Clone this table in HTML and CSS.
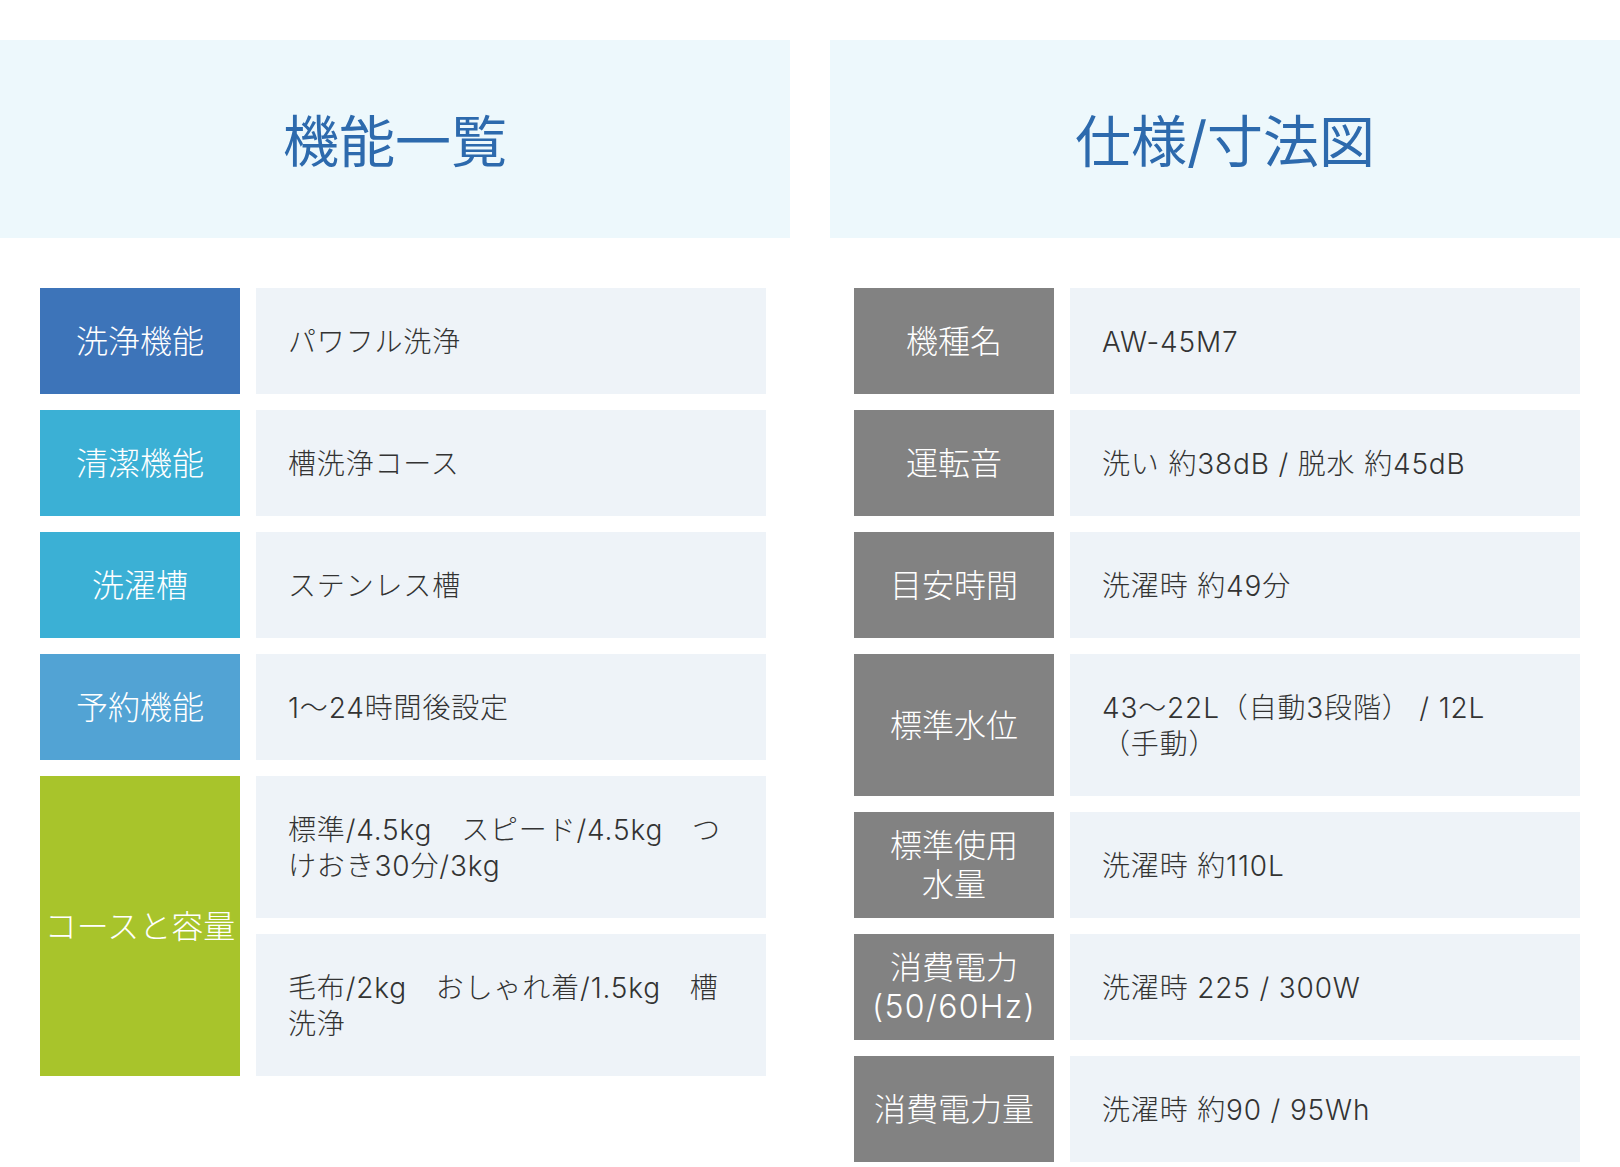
FILE: index.html
```html
<!DOCTYPE html>
<html lang="ja">
<head>
<meta charset="utf-8">
<title>機能一覧 / 仕様</title>
<link rel="stylesheet" href="styles.css">
</head>
<body>
<div class="page">
  <section class="col col-left">
    <header class="col-head"><h2>機能一覧</h2></header>
    <div class="rows">
      <div class="row">
        <div class="label c-blue">洗浄機能</div>
        <div class="value">パワフル洗浄</div>
      </div>
      <div class="row">
        <div class="label c-cyan">清潔機能</div>
        <div class="value">槽洗浄コース</div>
      </div>
      <div class="row">
        <div class="label c-cyan">洗濯槽</div>
        <div class="value">ステンレス槽</div>
      </div>
      <div class="row">
        <div class="label c-sky">予約機能</div>
        <div class="value">1〜24時間後設定</div>
      </div>
      <div class="row">
        <div class="label c-green">コースと容量</div>
        <div class="subs">
          <div class="value">標準/4.5kg　スピード/4.5kg　つ<br>けおき30分/3kg</div>
          <div class="value">毛布/2kg　おしゃれ着/1.5kg　槽<br>洗浄</div>
        </div>
      </div>
    </div>
  </section>
  <section class="col col-right">
    <header class="col-head"><h2>仕様/寸法図</h2></header>
    <div class="rows">
      <div class="row">
        <div class="label c-gray">機種名</div>
        <div class="value">AW-45M7</div>
      </div>
      <div class="row">
        <div class="label c-gray">運転音</div>
        <div class="value">洗い 約38dB / 脱水 約45dB</div>
      </div>
      <div class="row">
        <div class="label c-gray">目安時間</div>
        <div class="value">洗濯時 約49分</div>
      </div>
      <div class="row">
        <div class="label c-gray">標準水位</div>
        <div class="value">43〜22L（自動3段階） / 12L<br>（手動）</div>
      </div>
      <div class="row">
        <div class="label c-gray"><span class="ln">標準使用</span><span class="ln">水量</span></div>
        <div class="value">洗濯時 約110L</div>
      </div>
      <div class="row">
        <div class="label c-gray"><span class="ln">消費電力</span><span class="ln ln-latin">(50/60Hz)</span></div>
        <div class="value">洗濯時 225 / 300W</div>
      </div>
      <div class="row">
        <div class="label c-gray">消費電力量</div>
        <div class="value">洗濯時 約90 / 95Wh</div>
      </div>
    </div>
  </section>
</div>
</body>
</html>
```
FILE: styles.css
```css
* { box-sizing: border-box; }
html, body { margin: 0; padding: 0; background: #ffffff; }
body {
  font-family: Inter, "Noto Sans CJK JP", "Noto Sans", sans-serif;
  font-weight: 300;
  color: #333333;
}
.page {
  display: grid;
  grid-template-columns: 790px 790px;
  column-gap: 40px;
  padding-top: 40px;
  align-items: start;
}
.col-head {
  height: 198px;
  padding-top: 6px;
  background: #edf8fc;
  display: flex;
  align-items: center;
  justify-content: center;
  margin-bottom: 50px;
}
.col-head h2 {
  margin: 0;
  font-size: 56px;
  font-weight: 400;
  line-height: 1;
  color: #2d6aad;
}
.rows {
  display: flex;
  flex-direction: column;
  gap: 16px;
}
.col-left .rows { padding: 0 24px 0 40px; }
.col-right .rows { padding: 0 40px 0 24px; }
.row {
  display: flex;
  gap: 16px;
  align-items: stretch;
}
.label {
  flex: none;
  width: 200px;
  display: flex;
  flex-direction: column;
  align-items: center;
  justify-content: center;
  text-align: center;
  color: #ffffff;
  font-size: 32px;
  line-height: 39px;
  font-weight: 300;
}
.ln { display: block; }
.ln-latin { letter-spacing: 0.04em; }
.c-blue { background: #3d74b9; }
.c-cyan { background: #3bb0d5; }
.c-sky { background: #52a3d4; }
.c-green { background: #a8c42b; }
.c-gray { background: #828282; }
.subs {
  flex: 1;
  display: flex;
  flex-direction: column;
  gap: 16px;
}
.value {
  flex: 1;
  background: #eef3f8;
  padding: 36px 28px 34px 32px;
  font-size: 28px;
  line-height: 36px;
  letter-spacing: 0.03em;
  color: #333333;
}
```
